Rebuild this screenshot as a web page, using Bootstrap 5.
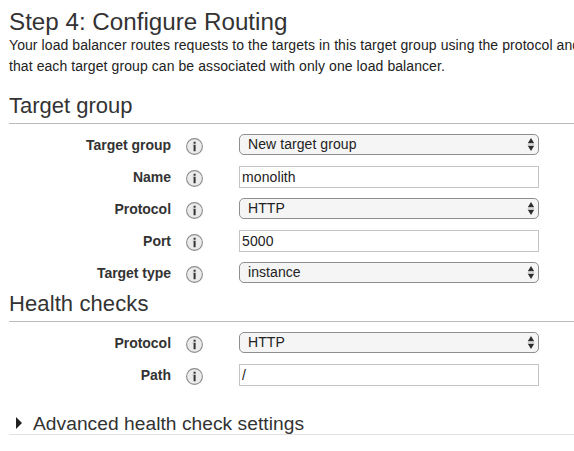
<!DOCTYPE html>
<html lang="en">
<head>
<meta charset="utf-8">
<meta name="viewport" content="width=device-width, initial-scale=1">
<title>Step 4: Configure Routing</title>
<link href="https://cdn.jsdelivr.net/npm/bootstrap@5.3.0/dist/css/bootstrap.min.css" rel="stylesheet">
<style>
body { font-family: "Liberation Sans", Arial, sans-serif; font-size: 14px; line-height: 21px; color: #333; background: #fff; }
.wizard { padding-left: 9px; height: 451px; }
.page-title { font-size: 24.2px; line-height: 28px; height: 35px; padding-top: 8px; }
.intro { color: #222; letter-spacing: .08px; }
.section-title { font-size: 22px; line-height: 26px; border-bottom: 1px solid #bbb; }
.section-first { margin-top: 15px; height: 32px; padding-top: 1px; }
.section-next { height: 33px; padding-top: 2px; letter-spacing: .1px; }
.field-row { height: 32px; }
.field-label { width: 162px; font-weight: 700; line-height: 20px; padding-bottom: 1px; letter-spacing: -.03px; }
.info { width: 17px; height: 17px; margin: 3px 36px 0 15px; }
.field-box { width: 300px; }
.field-box.position-relative { margin-bottom: 1px; padding-bottom: 1px; }
.form-select.aws-select { height: 21px; padding: 0 24px 0 8px; font-size: 14px; line-height: 18px; letter-spacing: .07px; color: #222; background: #f5f5f5; border: 1px solid #8e8e8e; border-radius: 5px; }
.form-control.aws-input { height: 22px; padding: 0 2px; font-size: 14px; line-height: 20px; letter-spacing: .1px; color: #222; border: 1px solid #c4c4c4; border-radius: 0; }
.select-arrows { right: 4px; top: 4px; width: 8px; height: 13px; pointer-events: none; }
.fields { padding-top: 5px; }
.advanced { margin-top: 20px; height: 24px; font-size: 19.2px; line-height: 24px; letter-spacing: .04px; border-bottom: 1px solid #e2e2e2; }
.advanced-title { padding-top: 3px; }
.expander { width: 6px; height: 12px; margin: 0 11px 0 7px; }
</style>
<script src="https://cdn.jsdelivr.net/npm/bootstrap@5.3.0/dist/js/bootstrap.bundle.min.js"></script>
</head>
<body class="overflow-hidden">
<svg class="d-none">
  <symbol id="info" viewBox="0 0 17 17"><circle cx="8.5" cy="8.5" r="7.9" fill="#ebebeb" stroke="#8d8d8d" stroke-width="1.1"/><path d="M7.6 3.8h2v1.9h-2zM7.6 6.8h2v6.4h-2z" fill="#333"/><path d="M6.8 6.8h.8v.9h-.8z" fill="#888"/></symbol>
  <symbol id="arrows" viewBox="0 0 8 13"><path d="M4 0 7.2 5.3H.8zM4 13 .8 7.7h6.4z" fill="#2d2d2d"/><path d="M.5 6.5h7" stroke="#d5d5d5"/></symbol>
</svg>
<main class="wizard">
  <h1 class="page-title fw-normal m-0">Step 4: Configure Routing</h1>
  <p class="intro text-nowrap m-0">Your load balancer routes requests to the targets in this target group using the protocol and<br>that each target group can be associated with only one load balancer.</p>

  <h2 class="section-title section-first fw-normal mb-0">Target group</h2>
  <div class="fields">
    <div class="field-row d-flex align-items-center">
      <label class="field-label text-end" for="group">Target group</label><svg class="info"><use href="#info"/></svg>
      <div class="field-box position-relative"><select id="group" class="form-select aws-select"><option>New target group</option></select><svg class="select-arrows position-absolute"><use href="#arrows"/></svg></div>
    </div>
    <div class="field-row d-flex align-items-center">
      <label class="field-label text-end" for="name">Name</label><svg class="info"><use href="#info"/></svg>
      <div class="field-box"><input id="name" class="form-control aws-input" value="monolith"></div>
    </div>
    <div class="field-row d-flex align-items-center">
      <label class="field-label text-end" for="protocol">Protocol</label><svg class="info"><use href="#info"/></svg>
      <div class="field-box position-relative"><select id="protocol" class="form-select aws-select"><option>HTTP</option></select><svg class="select-arrows position-absolute"><use href="#arrows"/></svg></div>
    </div>
    <div class="field-row d-flex align-items-center">
      <label class="field-label text-end" for="port">Port</label><svg class="info"><use href="#info"/></svg>
      <div class="field-box"><input id="port" class="form-control aws-input" value="5000"></div>
    </div>
    <div class="field-row d-flex align-items-center">
      <label class="field-label text-end" for="type">Target type</label><svg class="info"><use href="#info"/></svg>
      <div class="field-box position-relative"><select id="type" class="form-select aws-select"><option>instance</option></select><svg class="select-arrows position-absolute"><use href="#arrows"/></svg></div>
    </div>
  </div>

  <h2 class="section-title section-next fw-normal mb-0">Health checks</h2>
  <div class="fields">
    <div class="field-row d-flex align-items-center">
      <label class="field-label text-end" for="hc-protocol">Protocol</label><svg class="info"><use href="#info"/></svg>
      <div class="field-box position-relative"><select id="hc-protocol" class="form-select aws-select"><option>HTTP</option></select><svg class="select-arrows position-absolute"><use href="#arrows"/></svg></div>
    </div>
    <div class="field-row d-flex align-items-center">
      <label class="field-label text-end" for="path">Path</label><svg class="info"><use href="#info"/></svg>
      <div class="field-box"><input id="path" class="form-control aws-input" value="/"></div>
    </div>
  </div>

  <div class="advanced d-flex align-items-center">
    <svg class="expander" viewBox="0 0 6 12"><path d="M0 0 6 6 0 12z" fill="#222"/></svg>
    <span class="advanced-title">Advanced health check settings</span>
  </div>
</main>
</body>
</html>
